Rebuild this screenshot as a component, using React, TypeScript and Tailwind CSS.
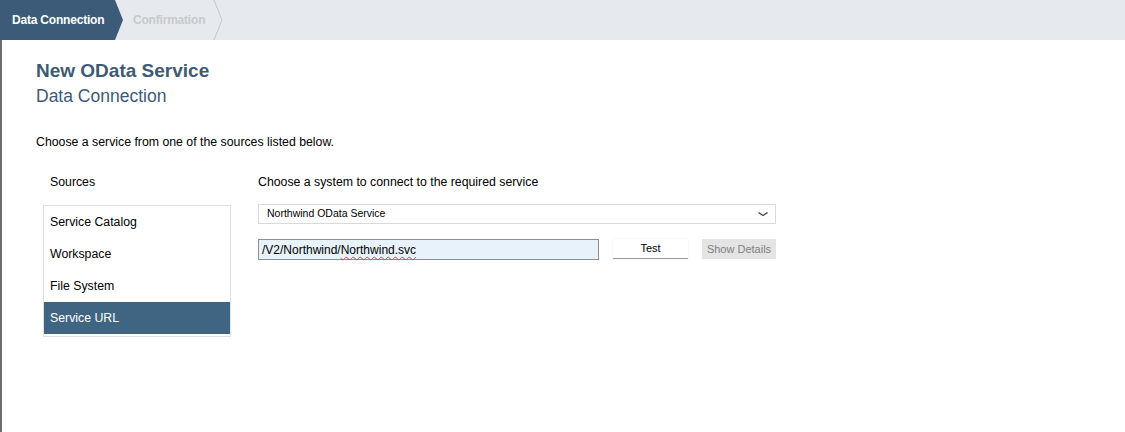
import React from "react";

export default function App() {
  const font = { fontFamily: '"Liberation Sans", Arial, sans-serif' };
  return (
    <div className="w-[1125px] h-[432px] bg-white overflow-hidden flex flex-col text-black" style={font}>
      {/* Header steps */}
      <div className="h-[40px] bg-[#e6eaee] flex items-stretch shrink-0">
        <div className="w-[123px] bg-[#3b5b78] [clip-path:polygon(0_0,115px_0,123px_50%,115px_100%,0_100%)] flex items-center pl-[12px] text-white text-[12px] font-bold tracking-[-0.2px]">
          Data Connection
        </div>
        <div className="flex items-center pl-[10px] w-[90px] text-[12px] font-bold text-[#c6cacd] tracking-[-0.2px]">
          Confirmation
        </div>
        <svg width="12" height="40" viewBox="0 0 12 40" className="shrink-0">
          <polyline points="1,0 9,20 1,40" fill="none" stroke="#c3c7cb" strokeWidth="1" />
        </svg>
      </div>

      <div className="flex flex-1">
        {/* left window edge */}
        <div className="w-[2px] bg-[#6f6f6f] shrink-0" />
        <div className="flex-1 pl-[34px] pt-[20px]">
          <div className="text-[19px] font-bold text-[#3d5a75] leading-[22px]">New OData Service</div>
          <div className="text-[17.5px] text-[#3d5a75] leading-[22px] mt-[3px]">Data Connection</div>
          <div className="text-[12.3px] mt-[28px] leading-[14px]">Choose a service from one of the sources listed below.</div>

          <div className="flex mt-[26px]">
            {/* Sources */}
            <div className="ml-[7px] w-[188px]">
              <div className="text-[12.3px] leading-[14px] pl-[7px]">Sources</div>
              <div className="mt-[16px] border border-[#e0e0e0] h-[132px] flex flex-col">
                {["Service Catalog", "Workspace", "File System"].map((s) => (
                  <div key={s} className="h-[32px] flex items-center pl-[6px] text-[12.3px]">{s}</div>
                ))}
                <div className="h-[32px] flex items-center pl-[6px] text-[12.3px] bg-[#406583] text-white">Service URL</div>
              </div>
            </div>

            {/* Right panel */}
            <div className="ml-[27px] w-[518px]">
              <div className="text-[12.3px] leading-[14px]">Choose a system to connect to the required service</div>
              <div className="mt-[15px] h-[20px] border border-[#d9d9d9] flex items-center justify-between pl-[8px] pr-[6px] text-[10.5px]">
                <span>Northwind OData Service</span>
                <svg width="12" height="8" viewBox="0 0 12 8">
                  <polyline points="1.5,2.5 6,5.5 10.5,2.5" fill="none" stroke="#444" strokeWidth="1.4" />
                </svg>
              </div>
              <div className="mt-[15px] flex items-start">
                <div className="w-[341px] h-[21px] bg-[#e8f2fa] border border-[#8a8f94] flex items-center pl-[3px] text-[12px]">
                  <span>/V2/Northwind/</span>
                  <span className="underline decoration-wavy decoration-[#e04040] decoration-1 underline-offset-2">Northwind.svc</span>
                </div>
                <div className="ml-[14px] w-[75px] h-[20px] bg-white border-b border-[#9a9a9a] shadow-[0_0_1px_rgba(0,0,0,0.15)] flex items-center justify-center text-[11px]">Test</div>
                <div className="ml-[14px] w-[74px] h-[20px] bg-[#e4e4e4] flex items-center justify-center text-[11px] text-[#808080]">Show Details</div>
              </div>
            </div>
          </div>
        </div>
      </div>
    </div>
  );
}
